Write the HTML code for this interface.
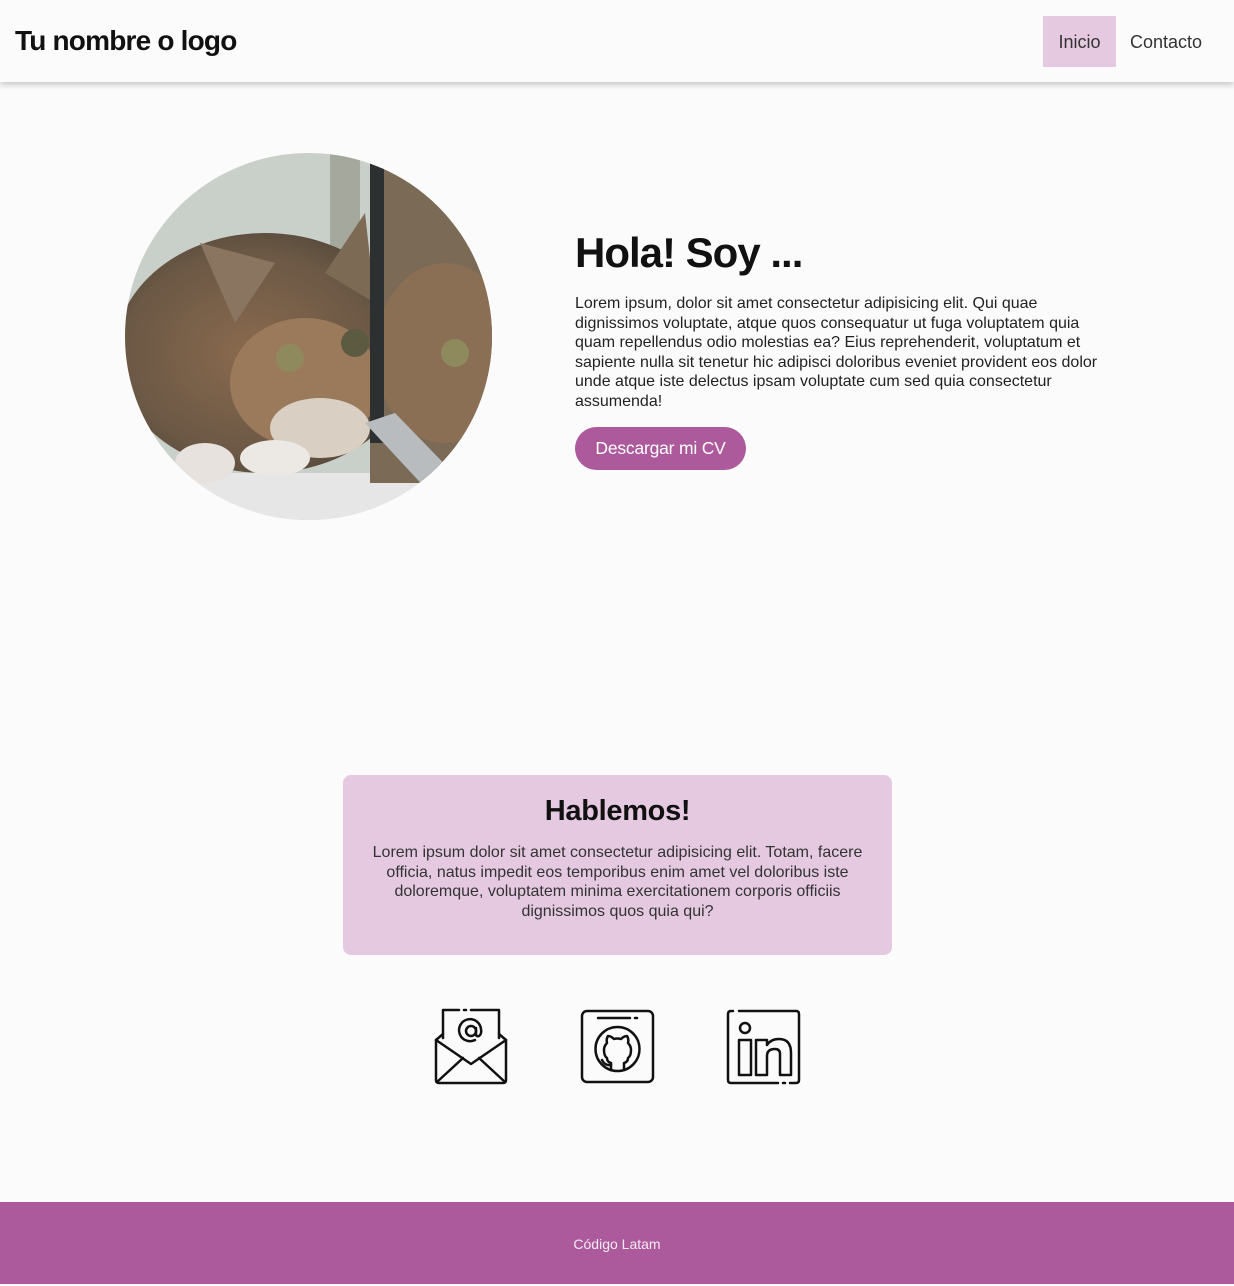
<!DOCTYPE html>
<html><head><meta charset="utf-8"><style>
*{margin:0;padding:0;box-sizing:border-box}
body{width:1234px;height:1284px;background:#fbfbfb;font-family:"Liberation Sans",sans-serif;color:#222;position:relative;overflow:hidden}
.hdr{position:absolute;left:0;top:0;width:1234px;height:82px;background:#fbfbfb;box-shadow:0 3px 6px rgba(0,0,0,.2)}
.logo{position:absolute;left:15px;top:25px;font-size:28px;font-weight:bold;letter-spacing:-.8px;color:#111}
.nav1{position:absolute;left:1043px;top:16px;width:73px;height:51px;background:#e5c9e0;font-size:18px;text-align:center;line-height:52px;color:#333}
.nav2{position:absolute;left:1130px;top:16px;height:51px;font-size:18px;line-height:52px;color:#333;letter-spacing:0}
h1{position:absolute;left:575px;top:229px;font-size:42px;font-weight:bold;letter-spacing:-1px;color:#111}
.p1{position:absolute;left:575px;top:294px;font-size:16px;line-height:19.6px;color:#222;white-space:nowrap}
.btn{position:absolute;left:575px;top:427px;width:171px;height:43px;border-radius:22px;background:#ad5a9d;color:#fff;font-size:17.5px;text-align:center;line-height:43px;letter-spacing:-.2px}
.card{position:absolute;left:343px;top:775px;width:549px;height:180px;background:#e5c9e0;border-radius:8px;text-align:center}
.card h2{margin-top:20px;font-size:29px;font-weight:bold;color:#111;letter-spacing:-.3px}
.card p{margin-top:15px;font-size:16px;line-height:19.6px;color:#333;white-space:nowrap}
.foot{position:absolute;left:0;top:1202px;width:1234px;height:82px;background:#ad5a9d;color:#f4eaf2;text-align:center;line-height:84px;font-size:14px}
svg.i{position:absolute;top:1008px}
</style></head><body>
<div class="hdr"><div class="logo">Tu nombre o logo</div><div class="nav1">Inicio</div><div class="nav2">Contacto</div></div>

<svg style="position:absolute;left:125px;top:153px" width="367" height="367" viewBox="0 0 367 367">
<defs><clipPath id="c"><circle cx="183.5" cy="183.5" r="183.5"/></clipPath>
<radialGradient id="fur" cx=".45" cy=".5" r=".6"><stop offset="0" stop-color="#8a6a4e"/><stop offset=".7" stop-color="#6b5845"/><stop offset="1" stop-color="#4e4437"/></radialGradient></defs>
<g clip-path="url(#c)">
<rect width="367" height="367" fill="#c9cfc9"/>
<rect x="205" width="30" height="200" fill="#a5a89c"/>
<rect y="320" width="367" height="47" fill="#e6e6e6"/>
<ellipse cx="140" cy="200" rx="150" ry="120" fill="url(#fur)"/>
<polygon points="75,90 150,110 110,170" fill="#8a7560"/>
<polygon points="240,60 250,150 200,120" fill="#7d6a55"/>
<ellipse cx="180" cy="230" rx="75" ry="65" fill="#9b7a5c"/>
<ellipse cx="195" cy="275" rx="50" ry="30" fill="#d9cfc3"/>
<ellipse cx="165" cy="205" rx="14" ry="14" fill="#8e8a5e"/>
<ellipse cx="230" cy="190" rx="14" ry="14" fill="#5d5a42"/>
<ellipse cx="80" cy="310" rx="30" ry="20" fill="#e8e2de"/>
<ellipse cx="150" cy="305" rx="35" ry="18" fill="#ece8e4"/>
<rect x="245" width="370" height="330" fill="#7a6a56"/>
<ellipse cx="320" cy="200" rx="70" ry="90" fill="#8a6f55"/>
<ellipse cx="330" cy="200" rx="14" ry="14" fill="#8e8a5e"/>
<rect x="245" y="0" width="14" height="290" fill="#2c3030"/>
<polygon points="240,270 270,260 367,360 330,367" fill="#b8bcbe"/>
</g></svg>

<h1>Hola! Soy ...</h1>
<div class="p1">Lorem ipsum, dolor sit amet consectetur adipisicing elit. Qui quae<br>dignissimos voluptate, atque quos consequatur ut fuga voluptatem quia<br>quam repellendus odio molestias ea? Eius reprehenderit, voluptatum et<br>sapiente nulla sit tenetur hic adipisci doloribus eveniet provident eos dolor<br>unde atque iste delectus ipsam voluptate cum sed quia consectetur<br>assumenda!</div>
<div class="btn">Descargar mi CV</div>

<div class="card"><h2>Hablemos!</h2><p>Lorem ipsum dolor sit amet consectetur adipisicing elit. Totam, facere<br>officia, natus impedit eos temporibus enim amet vel doloribus iste<br>doloremque, voluptatem minima exercitationem corporis officiis<br>dignissimos quos quia qui?</p></div>

<svg class="i" style="left:433px" width="76" height="78" viewBox="0 0 76 78" fill="none" stroke="#111" stroke-width="2.5" stroke-linejoin="round" stroke-linecap="round">
<path d="M10 30V2H26M31 2H33M38 2H66V30"/>
<path d="M10 26L3 32V72Q3 75 6 75H70Q73 75 73 72V32L66 26"/>
<path d="M3 32L38 56L73 32"/><path d="M4 74L30 50M72 74L46 50"/>
<circle cx="38" cy="23" r="5"/><path d="M43 20V26Q43 29 46 28Q49 26 48 21A11 11 0 1 0 42 32"/>
</svg>
<svg class="i" style="left:580px" width="76" height="78" viewBox="0 0 76 78" fill="none" stroke="#111" stroke-width="2.5" stroke-linejoin="round" stroke-linecap="round">
<rect x="2" y="3" width="71" height="71" rx="5"/><path d="M18 10H50M55 10H57"/>
<circle cx="37.5" cy="41" r="22"/>
<path d="M31 62V55Q27 54 27 50Q24 48 24 42Q24 38 27 35Q26 31 28 28Q31 28 34 31Q37 30 41 31Q44 28 47 28Q49 31 48 35Q51 38 51 42Q51 48 48 50Q48 54 44 55V62"/>
<path d="M31 57Q25 58 22 52"/>
</svg>
<svg class="i" style="left:726px" width="76" height="78" viewBox="0 0 76 78" fill="none" stroke="#111" stroke-width="2.5" stroke-linejoin="round" stroke-linecap="round">
<path d="M13 3H70Q73 3 73 6V72Q73 75 70 75H64M59 75H57M52 75H5Q2 75 2 72V6Q2 3 5 3H7"/>
<circle cx="19" cy="20" r="5"/>
<path d="M13 32H25V67H13Z"/>
<path d="M30 32H41V37Q45 31 53 31Q65 31 65 45V67H54V46Q54 41 49 41Q41 41 41 48V67H30Z"/>
</svg>

<div class="foot">Código Latam</div>
</body></html>
